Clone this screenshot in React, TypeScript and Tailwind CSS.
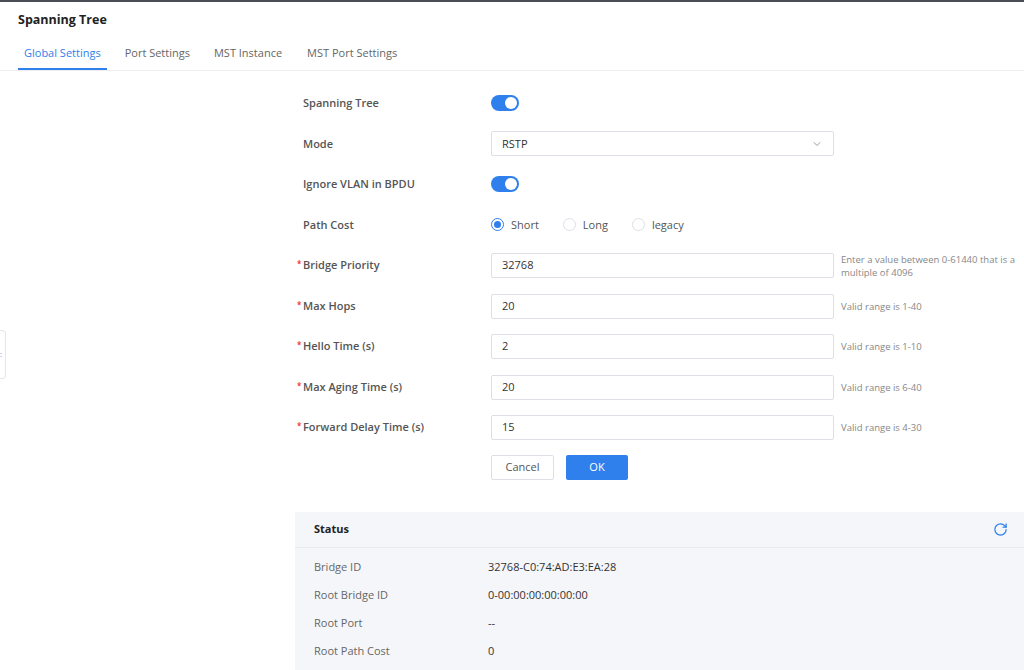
import React from 'react';
import { RotateCw, ChevronDown } from 'lucide-react';

const Toggle = () => (
  <div className="w-[28px] h-[16px] rounded-full bg-[#2f80ed] relative">
    <div className="absolute right-[2px] top-[2px] w-[12px] h-[12px] rounded-full bg-white" />
  </div>
);

const Label = ({ text, req }: { text: string; req?: boolean }) => (
  <div className="w-[188px] relative text-[11px] font-semibold text-[#555]">
    {req && <span className="absolute left-[-6px] top-[1px] text-[#f5222d] text-[8px]">*</span>}
    {text}
  </div>
);

const Input = ({ value }: { value: string }) => (
  <div className="w-[343px] h-[25px] border border-[#dcdfe6] rounded-[2px] flex items-center px-[10px] text-[11px] text-[#333]">
    {value}
  </div>
);

const Radio = ({ label, on }: { label: string; on?: boolean }) => (
  <div className="flex items-center gap-[7px] mr-[24px]">
    <div className={`w-[13px] h-[13px] rounded-full border ${on ? 'border-[#2f80ed]' : 'border-[#dcdfe6]'} flex items-center justify-center`}>
      {on && <div className="w-[7px] h-[7px] rounded-full bg-[#2f80ed]" />}
    </div>
    <span className="text-[11px] text-[#555]">{label}</span>
  </div>
);

const App = () => {
  const fields = [
    { label: 'Bridge Priority', value: '32768', help: 'Enter a value between 0-61440 that is a multiple of 4096' },
    { label: 'Max Hops', value: '20', help: 'Valid range is 1-40' },
    { label: 'Hello Time (s)', value: '2', help: 'Valid range is 1-10' },
    { label: 'Max Aging Time (s)', value: '20', help: 'Valid range is 6-40' },
    { label: 'Forward Delay Time (s)', value: '15', help: 'Valid range is 4-30' },
  ];
  const status = [
    ['Bridge ID', '32768-C0:74:AD:E3:EA:28'],
    ['Root Bridge ID', '0-00:00:00:00:00:00'],
    ['Root Port', '--'],
    ['Root Path Cost', '0'],
  ];

  return (
    <div className="w-[1024px] h-[670px] overflow-hidden bg-white relative border-t-2 border-[#4a4d55]" style={{ fontFamily: '"Open Sans", sans-serif' }}>
      <div className="absolute left-0 top-[328px] w-[6px] h-[49px] border border-l-0 border-[#e4e6ea] rounded-r-[4px] flex items-center">
        <span className="text-[#2f80ed] text-[7px] leading-none">:</span>
      </div>
      <div className="px-[18px] pt-[9px] text-[12.5px] font-bold text-[#222]">Spanning Tree</div>
      <div className="flex px-[18px] mt-[15px] border-b border-[#eceef2] text-[11px] text-[#666]">
        <div className="px-[6px] pb-[7px] text-[#2f80ed] border-b-2 border-[#2f80ed]">Global Settings</div>
        <div className="ml-[18px] pb-[7px]">Port Settings</div>
        <div className="ml-[24px] pb-[7px]">MST Instance</div>
        <div className="ml-[25px] pb-[7px]">MST Port Settings</div>
      </div>

      <div className="ml-[303px] mt-[12px] flex flex-col">
        <div className="flex items-center h-[40px]"><Label text="Spanning Tree" /><Toggle /></div>
        <div className="flex items-center h-[41px]">
          <Label text="Mode" />
          <div className="w-[343px] h-[25px] border border-[#dcdfe6] rounded-[2px] flex items-center justify-between px-[10px] text-[11px] text-[#333]">
            RSTP <ChevronDown className="w-[12px] h-[12px] text-[#999]" />
          </div>
        </div>
        <div className="flex items-center h-[40px]"><Label text="Ignore VLAN in BPDU" /><Toggle /></div>
        <div className="flex items-center h-[41px]">
          <Label text="Path Cost" />
          <Radio label="Short" on /><Radio label="Long" /><Radio label="legacy" />
        </div>
        {fields.map((f, i) => (
          <div key={i} className="flex items-center h-[40.5px]">
            <Label text={f.label} req />
            <Input value={f.value} />
            <div className="ml-[7px] w-[180px] text-[9.5px] leading-[13px] text-[#888]">{f.help}</div>
          </div>
        ))}
        <div className="flex ml-[188px] mt-[7px] gap-[12px]">
          <div className="w-[63px] h-[25px] border border-[#dcdfe6] rounded-[2px] text-[11px] text-[#555] flex items-center justify-center">Cancel</div>
          <div className="w-[62px] h-[25px] rounded-[2px] bg-[#2f80ed] text-[11px] text-white flex items-center justify-center">OK</div>
        </div>
      </div>

      <div className="ml-[295px] mt-[32px] bg-[#f5f6f9] h-[200px]">
        <div className="h-[36px] flex items-center justify-between px-[19px] border-b border-[#e8eaee]">
          <span className="text-[11px] font-bold text-[#222]">Status</span>
          <RotateCw className="w-[15px] h-[15px] text-[#2f80ed] mr-[-3px]" />
        </div>
        <div className="pt-[5px]">
          {status.map(([k, v]) => (
            <div key={k} className="flex h-[28px] items-center px-[19px] text-[11px]">
              <div className="w-[174px] text-[#666]">{k}</div>
              <div className="text-[#333]">{v}</div>
            </div>
          ))}
        </div>
      </div>
    </div>
  );
};

export default App;
